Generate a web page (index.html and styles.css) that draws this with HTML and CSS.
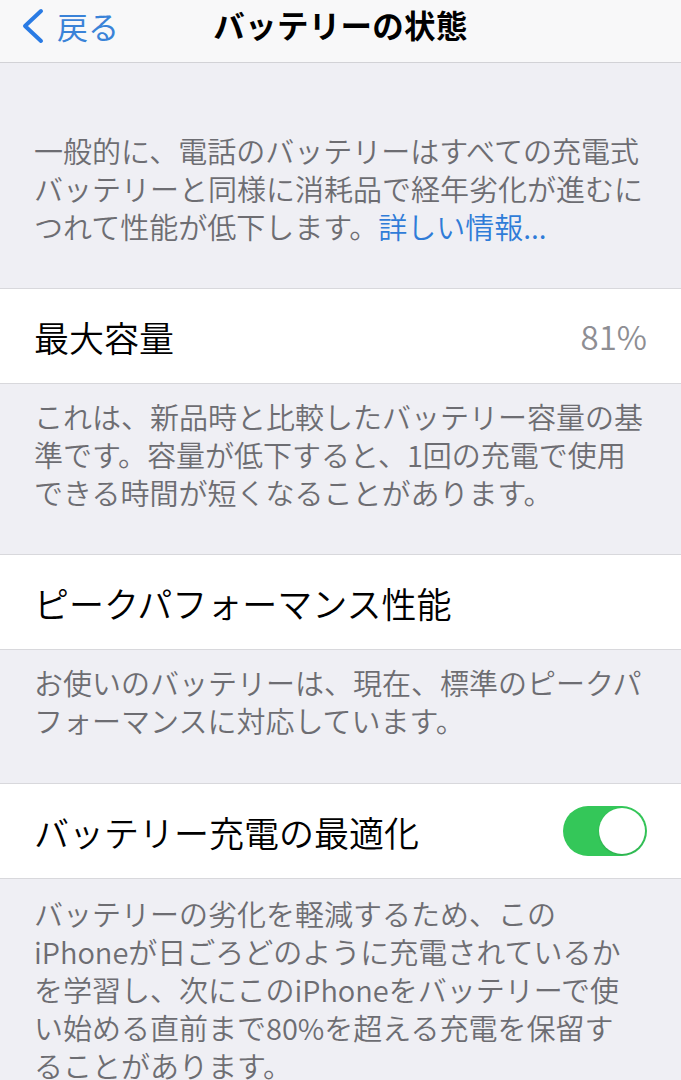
FILE: index.html
```html
<!DOCTYPE html>
<html lang="ja">
<head>
<meta charset="utf-8">
<title>バッテリーの状態</title>
<link rel="stylesheet" href="styles.css">
</head>
<body>
<header class="nav">
  <div class="nav-left">
    <svg class="chev" width="26" height="36" viewBox="0 0 26 36"><path d="M22 3 L6 18 L22 33" fill="none" stroke="#2a7be4" stroke-width="4" stroke-linecap="round" stroke-linejoin="round"/></svg>
    <span class="back">戻る</span>
  </div>
  <h1 class="title">バッテリーの状態</h1>
  <div class="nav-right"></div>
</header>
<main>
  <p class="note first">一般的に、電話のバッテリーはすべての充電式<br>バッテリーと同様に消耗品で経年劣化が進むに<br>つれて性能が低下します。<span class="link">詳しい情報...</span></p>
  <div class="cell"><span class="label">最大容量</span><span class="value">81%</span></div>
  <p class="note">これは、新品時と比較したバッテリー容量の基<br>準です。容量が低下すると、1回の充電で使用<br>できる時間が短くなることがあります。</p>
  <div class="cell"><span class="label">ピークパフォーマンス性能</span></div>
  <p class="note short">お使いのバッテリーは、現在、標準のピークパ<br>フォーマンスに対応しています。</p>
  <div class="cell"><span class="label">バッテリー充電の最適化</span><span class="toggle"><span class="knob"></span></span></div>
  <p class="note last">バッテリーの劣化を軽減するため、この<br>iPhoneが日ごろどのように充電されているか<br>を学習し、次にこのiPhoneをバッテリーで使<br>い始める直前まで80%を超える充電を保留す<br>ることがあります。</p>
</main>
</body>
</html>
```
FILE: styles.css
```css
html, body {
  margin: 0;
  padding: 0;
}
body {
  width: 681px;
  height: 1080px;
  overflow: hidden;
  background: #efeff4;
  font-family: "Noto Sans CJK JP", "Noto Sans", sans-serif;
  color: #000;
}
.nav {
  height: 62px;
  box-sizing: content-box;
  background: #f8f8f9;
  border-bottom: 1px solid #d2d2d6;
  display: grid;
  grid-template-columns: 1fr auto 1fr;
  align-items: start;
  padding-top: 0;
}
.nav-left {
  display: flex;
  align-items: center;
  padding-left: 19px;
  padding-top: 8px;
  gap: 12px;
}
.chev {
  display: block;
}
.back {
  font-size: 31px;
  line-height: 34px;
  color: #3a83d8;
}
.title {
  margin: 0;
  padding-top: 7px;
  font-size: 31.5px;
  font-weight: 700;
  line-height: 34px;
  letter-spacing: 0.3px;
}
main {
  display: flex;
  flex-direction: column;
}
.note {
  margin: 0;
  padding: 13px 34px 43px;
  font-size: 29px;
  line-height: 38px;
  font-weight: 350;
  color: #6d6d72;
  white-space: nowrap;
}
.note.first {
  padding-top: 68px;
}
.note.short {
  padding-bottom: 44px;
}
.note.last {
  padding-top: 15px;
}
.link {
  color: #2f7cd8;
}
.cell {
  height: 94px;
  background: #fff;
  border-top: 1px solid #d8d8dc;
  border-bottom: 1px solid #d8d8dc;
  display: flex;
  align-items: center;
  justify-content: space-between;
  padding: 0 34px 0 34px;
}
.label {
  font-size: 35px;
  line-height: 1;
  font-weight: 350;
}
.value {
  font-size: 33px;
  line-height: 1;
  font-weight: 350;
  color: #8e8e93;
}
.toggle {
  width: 84px;
  height: 50px;
  border-radius: 25px;
  background: #34c759;
  display: flex;
  align-items: center;
  justify-content: flex-end;
  padding: 0 2px;
  box-sizing: border-box;
}
.knob {
  width: 46px;
  height: 46px;
  border-radius: 50%;
  background: #fff;
  box-shadow: 0 1px 2px rgba(0,0,0,0.15);
}
```
